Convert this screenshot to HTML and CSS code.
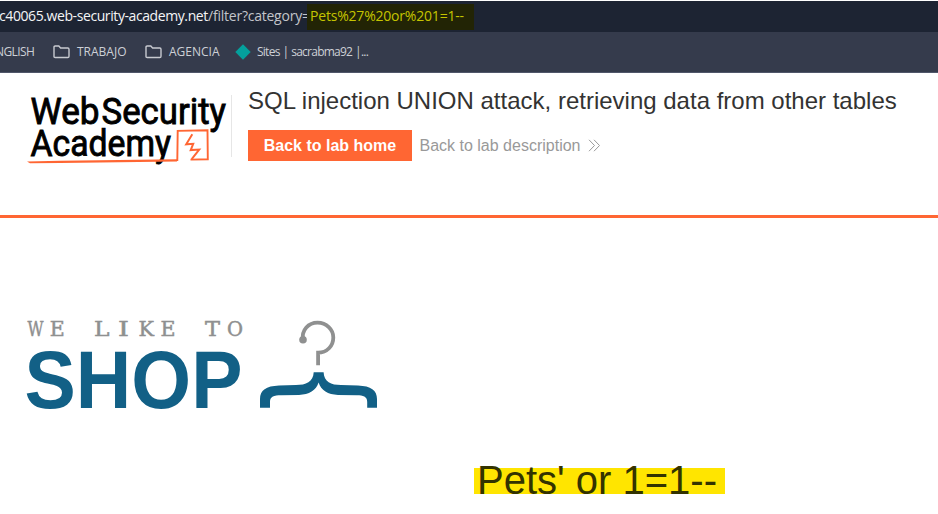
FILE: index.html
```html
<!DOCTYPE html>
<html lang="en">
<head>
<meta charset="utf-8">
<title>SQL injection UNION attack</title>
<link rel="stylesheet" href="styles.css">
</head>
<body>
<div class="address"><span class="host">c40065.web-security-academy.net</span><span class="path">/filter?category=</span><span class="query">Pets%27%20or%201=1--</span></div>
<nav class="bookmarks">
  <span class="mark english">NGLISH</span>
  <span class="mark trabajo"><svg width="17" height="14" viewBox="0 0 17 14"><path d="M1 11.5V2.2Q1 1 2.2 1H5.8L7.6 3H14.8Q16 3 16 4.2V11.3Q16 12.5 14.8 12.5H2.2Q1 12.5 1 11.5Z" fill="none" stroke="#c8cad0" stroke-width="1.4"/></svg><span>TRABAJO</span></span>
  <span class="mark agencia"><svg width="17" height="14" viewBox="0 0 17 14"><path d="M1 11.5V2.2Q1 1 2.2 1H5.8L7.6 3H14.8Q16 3 16 4.2V11.3Q16 12.5 14.8 12.5H2.2Q1 12.5 1 11.5Z" fill="none" stroke="#c8cad0" stroke-width="1.4"/></svg><span>AGENCIA</span></span>
  <span class="mark sites"><svg width="16" height="16" viewBox="0 0 16 16"><path d="M8 .3L15.7 8L8 15.7L.3 8Z" fill="#04a09c"/></svg><span>Sites | sacrabma92 |...</span></span>
</nav>
<header class="lab">
  <svg class="academy" width="210" height="80" viewBox="21 88 210 80">
    <g font-family="Roboto, sans-serif" font-size="37.5" fill="#000" stroke="#000" stroke-width=".9">
      <text x="30.5" y="123.6" textLength="69" lengthAdjust="spacingAndGlyphs">Web</text>
      <text x="101.5" y="123.6" textLength="124.5" lengthAdjust="spacingAndGlyphs">Security</text>
      <text x="30.5" y="156" textLength="140.5" lengthAdjust="spacingAndGlyphs">Academy</text>
    </g>
    <path d="M27 161.4L60 160.8L177 159.3V161.5L100 162.6L60 163L30 163.2Z" fill="#ff6633"/>
    <path d="M177.3 161L177.7 130.9L207.5 130.3L207.8 159.2L190.5 159.6" fill="none" stroke="#ff6633" stroke-width="1.9"/>
    <path d="M192.3 134.2L186.2 144.3L193.2 143.8L190.7 150.1L199.2 149.6L191.7 159.2" fill="none" stroke="#ff6633" stroke-width="2"/>
  </svg>
  <div class="details">
    <h2>SQL injection UNION attack, retrieving data from other tables</h2>
    <div class="actions">
      <a class="home">Back to lab home</a>
      <a class="back"><span>Back to lab description</span><svg width="13" height="13" viewBox="0 0 13 13"><path d="M1 .8L6.5 6.5L1 12.2M6 .8L11.5 6.5L6 12.2" fill="none" stroke="#999" stroke-width="1"/></svg></a>
    </div>
  </div>
</header>
<main>
  <svg class="shop" width="360" height="100" viewBox="22 314 360 100">
    <text class="tagline" y="336.4"><tspan x="27.5" textLength="16" lengthAdjust="spacingAndGlyphs">W</tspan><tspan x="49.8" textLength="15" lengthAdjust="spacingAndGlyphs">E</tspan> <tspan x="94" textLength="15.5" lengthAdjust="spacingAndGlyphs">L</tspan><tspan x="118" textLength="11" lengthAdjust="spacingAndGlyphs">I</tspan><tspan x="138.5" textLength="15.5" lengthAdjust="spacingAndGlyphs">K</tspan><tspan x="160.5" textLength="15" lengthAdjust="spacingAndGlyphs">E</tspan> <tspan x="205" textLength="15" lengthAdjust="spacingAndGlyphs">T</tspan><tspan x="227" textLength="16" lengthAdjust="spacingAndGlyphs">O</tspan></text>
    <text class="name" x="24.5" y="408" textLength="218" lengthAdjust="spacingAndGlyphs">SHOP</text>
    <circle cx="303" cy="339.7" r="3.8" fill="#8f9090"/>
    <path d="M303 339.7C301.5 330 308.5 322.7 317.5 322.7C326.5 322.7 333.3 329.5 333.3 337.5C333.3 346 327 352.7 318.1 352.7V365.3" fill="none" stroke="#8f9090" stroke-width="3.8"/>
    <path d="M313.7 372.2H323.6C324 382 331 384.9 341 385L358 385.4C371 386 377 390 377 399V407.8H367.2V402C367.2 396.5 363 395.5 357 395.3L338 394.9C328 394.5 321 390.5 318.6 382.5C316.2 390.5 309 394.5 299 394.9L281 395.3C274 395.5 270 396.5 270 402V407.8H260V399C260 390 266 386 279 385.4L296 385C306 384.9 313.3 382 313.7 372.2Z" fill="#126086"/>
  </svg>
  <h1>Pets' or 1=1--</h1>
</main>
</body>
</html>
```

FILE: styles.css
```css
* { box-sizing: border-box; }
body { margin: 0; height: 514px; overflow: hidden; background: #fff; color: #333332; font-family: "Liberation Sans", Arial, sans-serif; }
.address { display: flex; align-items: center; height: 32px; border-top: 1px solid #fff; background: #1d2433; color: #f4f5f7; font: 14px "Open Sans", "Noto Sans", sans-serif; white-space: nowrap; }
.host { width: 209px; margin: -3px 0 0 -1px; letter-spacing: -.41px; }
.path { width: 99px; margin-top: -3px; color: #c3c5ca; letter-spacing: -.23px; }
.query { width: 167px; height: 26px; margin-top: 0; padding-left: 3px; line-height: 23px; background: #222405; color: #c5c400; letter-spacing: -.2px; }
.bookmarks { display: flex; align-items: center; height: 41px; padding-bottom: 1px; background: #353b4c; border-bottom: 1px solid #50576a; color: #cdd0d6; font: 12px "Open Sans", "Noto Sans", sans-serif; white-space: nowrap; }
.mark { display: flex; align-items: center; gap: 7px; letter-spacing: -.2px; }
.english { width: 58px; margin-left: -5px; letter-spacing: -.6px; }
.trabajo, .agencia { width: 92px; letter-spacing: 0; }
.sites { gap: 6px; margin-left: -2px; letter-spacing: -.75px; word-spacing: .5px; }
.lab { display: flex; height: 145px; padding: 15px 0 0 21px; border-bottom: 3px solid #ff6633; }
.academy { flex: none; }
.details { padding-left: 17px; }
.details::before { content: ""; float: left; width: 1px; height: 62px; margin: 7px 0 0 -17px; background: #e6e6e6; }
h2 { margin: -1px 0 0; font-size: 24px; font-weight: 400; line-height: 27px; white-space: nowrap; }
.actions { display: flex; align-items: center; gap: 7.5px; margin-top: 16px; font-size: 16px; }
.home { width: 164px; height: 31px; line-height: 31px; text-align: center; background: #ff6633; color: #fff; font-weight: 700; }
.back { display: flex; align-items: center; gap: 8px; color: #999; }
main { display: flex; flex-direction: column; padding: 96px 0 0 22px; }
.tagline { font: 20.5px "DejaVu Serif", serif; fill: #8f9090; stroke: #8f9090; stroke-width: .5px; }
.name { font: 700 81px "Liberation Sans", Arial, sans-serif; fill: #126086; }
h1 { width: 251px; height: 46px; margin: 43px 0 0 452px; padding-left: 3px; font-size: 40px; font-weight: 400; line-height: 46px; white-space: nowrap; background: linear-gradient(#ffe500, #ffe500) 0 11px / 251px 26px no-repeat; color: #333300; }
```
